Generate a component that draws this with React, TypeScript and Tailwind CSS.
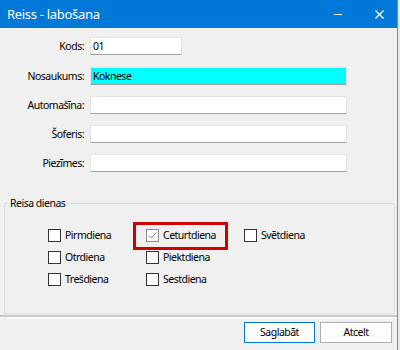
const FONT = { fontFamily: '"Noto Sans", "Open Sans", sans-serif' }

const FIELDS = [
  { label: 'Kods:', value: '01', width: 'w-[92px]', highlight: false },
  { label: 'Nosaukums:', value: 'Koknese', width: 'w-[257px]', highlight: true },
  { label: 'Automašīna:', value: '', width: 'w-[257px]', highlight: false },
  { label: 'Šoferis:', value: '', width: 'w-[257px]', highlight: false },
  { label: 'Piezīmes:', value: '', width: 'w-[257px]', highlight: false },
]

const DAYS = [
  ['Pirmdiena', 'Ceturtdiena', 'Svētdiena'],
  ['Otrdiena', 'Piektdiena', ''],
  ['Trešdiena', 'Sestdiena', ''],
]

const TEXT = 'text-[10.5px] tracking-[-0.5px] leading-none text-black'

function Checkbox({ label, checked }: { label: string; checked?: boolean }) {
  return (
    <div className="flex items-center h-[13px]">
      <span
        className={
          'w-[13px] h-[13px] bg-white border flex items-center justify-center ' +
          (checked ? 'border-[#8c8c8c]' : 'border-[#333333]')
        }
      >
        {checked && (
          <svg width="9" height="9" viewBox="0 0 9 9">
            <path d="M1 4.5 L3.5 7 L8 1.5" fill="none" stroke="#707070" strokeWidth="1" />
          </svg>
        )}
      </span>
      <span className={'ml-[4px] ' + TEXT}>{label}</span>
    </div>
  )
}

export default function App() {
  return (
    <div className="w-[400px] h-[350px] bg-[#e9e9e9] flex" style={FONT}>
      <div className="w-[398px] h-full flex flex-col bg-[#f0f0f0] border-r border-[#8a8a8a]">
        {/* Title bar */}
        <div className="h-[28px] bg-[#0078d7] flex items-center pl-[7px] text-white">
          <span className="text-[13px] tracking-[-0.3px] leading-none">Reiss - labošana</span>
          <div className="ml-auto flex items-center">
            <span className="w-[8px] h-px bg-white mr-[33px] mt-[1px]" />
            <svg width="9" height="9" viewBox="0 0 9 9" className="mr-[13px]">
              <path d="M0.5 0.5 L8.5 8.5 M8.5 0.5 L0.5 8.5" stroke="white" strokeWidth="1.3" />
            </svg>
          </div>
        </div>

        {/* Fields */}
        <div className="flex flex-col gap-[11px] pt-[9px]">
          {FIELDS.map((f, i) => (
            <div key={f.label} className={'flex items-center h-[18px] ' + (i === 1 ? 'mt-[1px]' : '')}>
              <span className={'w-[84px] text-right ' + TEXT}>{f.label}</span>
              <div
                className={
                  'ml-[6px] h-[18px] border border-[#e3e3e3] border-b-[#a0a0a0] flex items-center ' +
                  f.width +
                  (f.highlight ? ' bg-[#00ffff]' : ' bg-white')
                }
              >
                <span className={'pl-[2px] ' + TEXT}>{f.value}</span>
              </div>
            </div>
          ))}
        </div>

        {/* Group box */}
        <fieldset className="mt-[26px] mx-[4px] w-[391px] h-[116px] border border-[#dcdcdc] px-0 pb-0">
          <legend className={'ml-[4px] px-[1px] ' + TEXT}>Reisa dienas</legend>
          <div className="grid grid-cols-[98px_98px_98px] gap-y-[9px] pl-[43px] pt-[20px]">
            {DAYS.flat().map((d, i) =>
              d ? (
                <div key={i} className="relative">
                  {d === 'Ceturtdiena' && (
                    <div className="absolute left-[-13px] top-[-7px] w-[95px] h-[28px] border-[3px] border-[#cc0000]" />
                  )}
                  <Checkbox label={d} checked={d === 'Ceturtdiena'} />
                </div>
              ) : (
                <div key={i} />
              )
            )}
          </div>
        </fieldset>

        {/* Separator */}
        <div className="mt-[1px] border-t-2 border-[#c8c8c8] border-b border-b-white" />

        {/* Buttons */}
        <div className="flex justify-end gap-[5px] pr-[5px] pt-[4px]">
          <button className={'w-[71px] h-[21px] bg-[#fdfdfd] border border-[#0078d7] ' + TEXT}>
            Saglabāt
          </button>
          <button className={'w-[72px] h-[21px] bg-[#fdfdfd] border border-[#adadad] ' + TEXT}>
            Atcelt
          </button>
        </div>
      </div>
    </div>
  )
}
